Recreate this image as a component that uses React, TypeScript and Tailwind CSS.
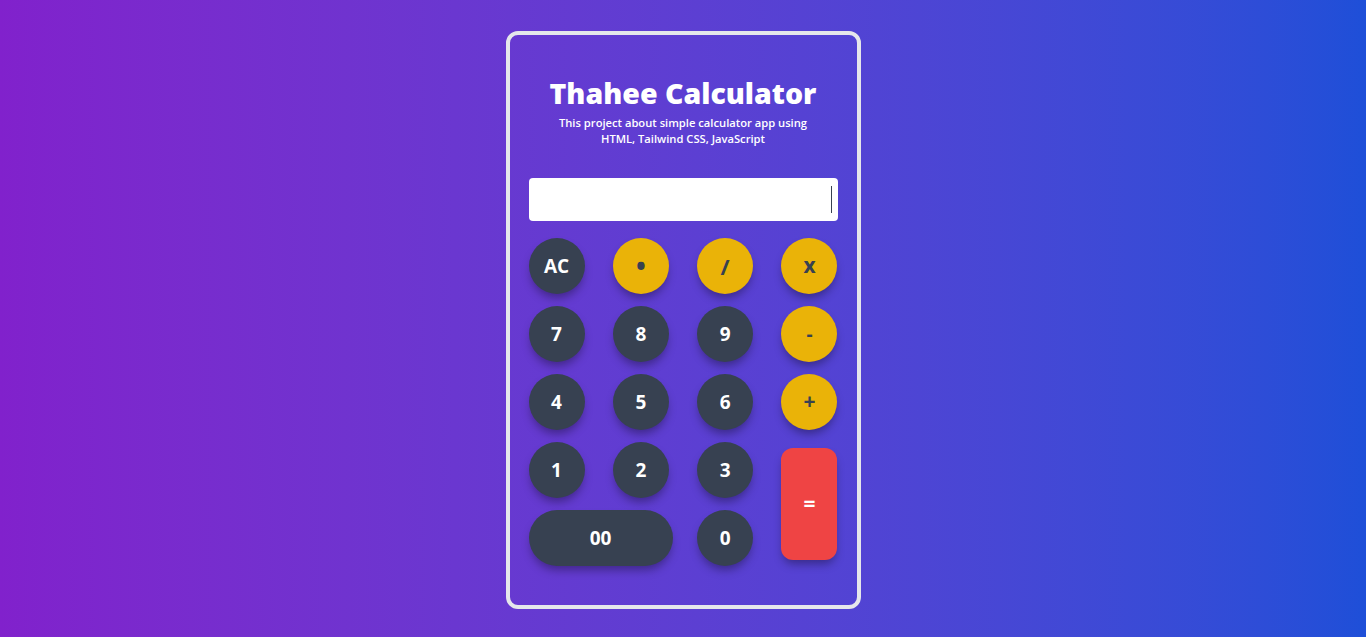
import React from "react";

const dark = "bg-[#374151] text-white";
const yellow = "bg-[#eab308] text-[#374151]";

function Btn({ label, cls, extra = "" }: { label: string; cls: string; extra?: string }) {
  return (
    <button
      className={`${cls} ${extra} flex items-center justify-center font-bold shadow-[0_6px_10px_-2px_rgba(0,0,0,0.35)]`}
    >
      {label}
    </button>
  );
}

export default function App() {
  const circle = "w-14 h-14 rounded-full text-[19px]";
  return (
    <div
      className="w-full h-[637px] bg-gradient-to-r from-[#8121cc] to-[#1e4fd8] flex justify-center pt-[31px]"
      style={{ fontFamily: '"Open Sans", "Noto Sans", sans-serif' }}
    >
      <div className="w-[355px] h-[578px] border-4 border-[#e5e7eb] rounded-[12px] px-[19px] pt-[40px] flex flex-col items-stretch">
        <h1 className="text-center text-white font-extrabold text-[28.5px] leading-[36px]">
          Thahee Calculator
        </h1>
        <p className="text-center text-white font-semibold text-[11.2px] leading-[16px] mt-[4px] px-5">
          This project about simple calculator app using HTML, Tailwind CSS, JavaScript
        </p>
        <div className="mt-[31px] h-[43px] bg-white rounded-[4px] flex items-center justify-end pr-[6px]">
          <div className="w-px h-[27px] bg-[#374151]" />
        </div>
        <div className="mt-[17px] grid grid-cols-[56px_56px_56px_56px] justify-between gap-y-3">
          <Btn label="AC" cls={dark} extra={circle} />
          <Btn label="•" cls={yellow} extra="w-14 h-14 rounded-full text-[26px]" />
          <Btn label="/" cls={yellow} extra="w-14 h-14 rounded-full text-[22px]" />
          <Btn label="x" cls={yellow} extra="w-14 h-14 rounded-full text-[21px]" />

          <Btn label="7" cls={dark} extra={circle} />
          <Btn label="8" cls={dark} extra={circle} />
          <Btn label="9" cls={dark} extra={circle} />
          <Btn label="-" cls={yellow} extra={circle} />

          <Btn label="4" cls={dark} extra={circle} />
          <Btn label="5" cls={dark} extra={circle} />
          <Btn label="6" cls={dark} extra={circle} />
          <Btn label="+" cls={yellow} extra="w-14 h-14 rounded-full text-[21px]" />

          <Btn label="1" cls={dark} extra={circle} />
          <Btn label="2" cls={dark} extra={circle} />
          <Btn label="3" cls={dark} extra={circle} />
          <div className="row-span-2 flex items-center">
            <Btn label="=" cls="bg-[#ef4444] text-white" extra="w-14 h-28 rounded-[12px] text-[21px]" />
          </div>

          <div className="col-span-2">
            <Btn label="00" cls={dark} extra="w-[144px] h-14 rounded-full text-[19px]" />
          </div>
          <Btn label="0" cls={dark} extra={circle} />
        </div>
      </div>
    </div>
  );
}
